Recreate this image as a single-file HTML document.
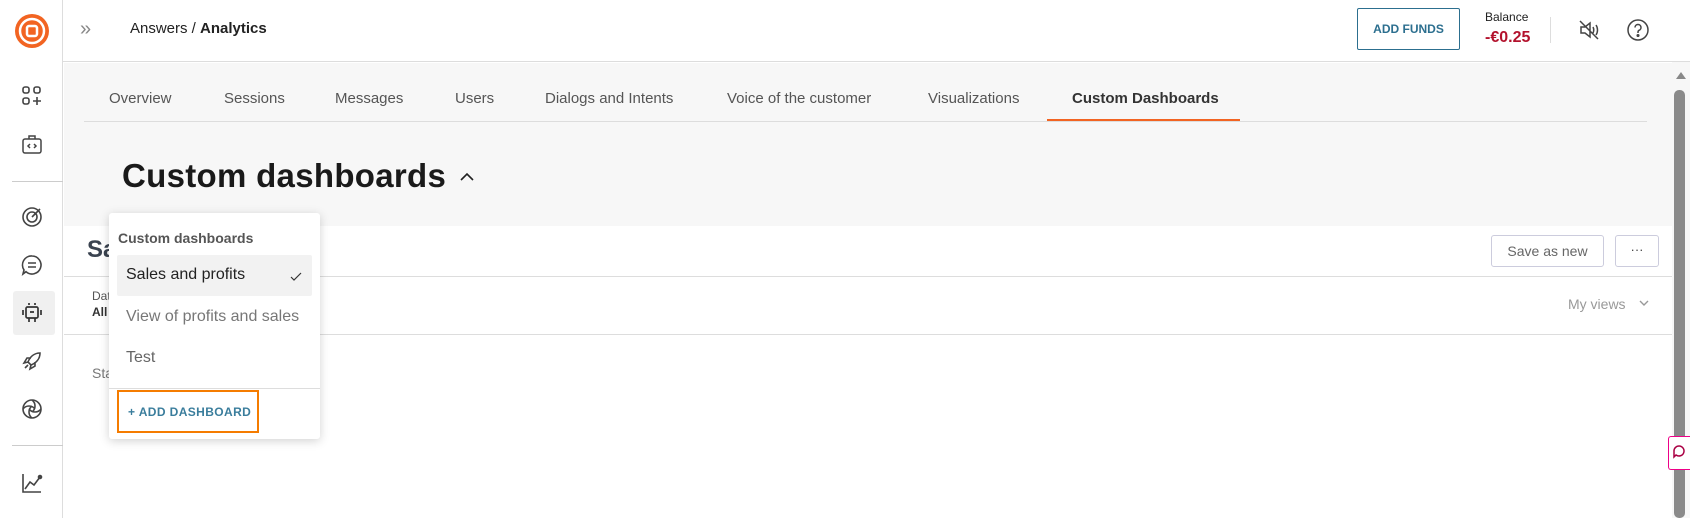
<!DOCTYPE html>
<html><head><meta charset="utf-8"><style>
*{box-sizing:border-box;margin:0;padding:0}
body{width:1690px;height:518px;overflow:hidden;background:#fff;font-family:"Liberation Sans",Arial,sans-serif;position:relative;color:#222}
.abs{position:absolute}
.side{left:0;top:0;width:63px;height:518px;border-right:1px solid #ddd;background:#fff}
.ic{position:absolute;left:20px;width:24px;height:24px}
.tab{position:absolute;top:90px;font-size:15px;color:#555}
</style></head><body>
<div class="abs side">
 <svg class="abs" style="left:14px;top:13px" width="36" height="36" viewBox="0 0 36 36"><circle cx="18" cy="18" r="17" fill="#f26422"/><circle cx="18" cy="18" r="12" fill="none" stroke="#fff" stroke-width="2.5"/><rect x="13" y="13" width="10" height="10" rx="2" fill="none" stroke="#fff" stroke-width="2.5"/></svg>
 <svg class="ic" style="top:84px" viewBox="0 0 24 24" fill="none" stroke="#444" stroke-width="1.6"><rect x="3" y="3" width="6" height="6" rx="2"/><rect x="14" y="3" width="6" height="6" rx="2"/><rect x="3" y="14" width="6" height="6" rx="2"/><path d="M17 13v8M13 17h8"/></svg>
 <svg class="ic" style="top:133px" viewBox="0 0 24 24" fill="none" stroke="#444" stroke-width="1.5"><rect x="3" y="6" width="18" height="14" rx="2"/><path d="M9 6V3h6v3M10 11l-2 2 2 2M14 11l2 2-2 2"/></svg>
 <div class="abs" style="left:12px;top:181px;width:51px;border-top:1px solid #ccc"></div>
 <svg class="ic" style="top:205px" viewBox="0 0 24 24" fill="none" stroke="#444" stroke-width="1.6"><circle cx="12" cy="12" r="9"/><circle cx="12" cy="12" r="5"/><path d="M12 12l8-8"/></svg>
 <svg class="ic" style="top:253px" viewBox="0 0 24 24" fill="none" stroke="#444" stroke-width="1.6"><path d="M12 3a9 9 0 1 1-6 15.7L3 21l1-4A9 9 0 0 1 12 3z"/><path d="M8 10h8M8 14h8"/></svg>
 <div class="abs" style="left:13px;top:291px;width:42px;height:44px;background:#f0f0f0;border-radius:3px"></div>
 <svg class="ic" style="top:301px" viewBox="0 0 24 24" fill="none" stroke="#333" stroke-width="1.7"><rect x="6" y="6" width="12" height="11" rx="1.5"/><path d="M9 2v2M15 2v2M3 9v5M21 9v5M9 17v4M15 17v4M10 11h4"/></svg>
 <svg class="ic" style="top:349px" viewBox="0 0 24 24" fill="none" stroke="#444" stroke-width="1.6"><path d="M20 4c-6 0-10 4-12 9l3 3c5-2 9-6 9-12zM8 13l-4 1 3-5h4M11 16l-1 4 5-3v-4M5 19l3-3"/></svg>
 <svg class="ic" style="top:397px" viewBox="0 0 24 24" fill="none" stroke="#444" stroke-width="1.6"><circle cx="12" cy="12" r="9"/><path d="M12 3c4 3 4 9 0 12M21 12c-3 4-9 4-12 0M12 21c-4-3-4-9 0-12M3 12c3-4 9-4 12 0"/></svg>
 <div class="abs" style="left:12px;top:445px;width:51px;border-top:1px solid #ccc"></div>
 <svg class="ic" style="top:471px" viewBox="0 0 24 24" fill="none" stroke="#444" stroke-width="1.6"><path d="M3 3v18h18M5 18l5-7 4 3 6-8"/><circle cx="20" cy="6" r="1.5" fill="#444"/></svg>
</div>
<!-- header -->
<div class="abs" style="left:63px;top:0;width:1627px;height:62px;border-bottom:1px solid #ddd;background:#fff"></div>
<div class="abs" style="left:80px;top:18px;font-size:20px;color:#888">&raquo;</div>
<div class="abs" style="left:130px;top:20px;font-size:15px;color:#222">Answers / <b>Analytics</b></div>
<div class="abs" style="left:1357px;top:8px;width:103px;height:42px;border:1.5px solid #2c6f8f;border-radius:2px;color:#2c6f8f;font-size:12px;font-weight:bold;display:flex;align-items:center;justify-content:center">ADD FUNDS</div>
<div class="abs" style="left:1485px;top:10px;font-size:12px;color:#222">Balance</div>
<div class="abs" style="left:1485px;top:29px;font-size:16px;color:#b3122d;font-weight:bold">-€0.25</div>
<div class="abs" style="left:1550px;top:17px;height:26px;border-left:1px solid #ddd"></div>
<svg class="abs" style="left:1577px;top:18px" width="24" height="24" viewBox="0 0 24 24" fill="none" stroke="#444" stroke-width="1.5"><path d="M4 9h4l5-4v14l-5-4H4zM16 9c1 2 1 4 0 6M19 7c2 3 2 7 0 10M3 3l18 18"/></svg>
<svg class="abs" style="left:1626px;top:18px" width="24" height="24" viewBox="0 0 24 24" fill="none" stroke="#444" stroke-width="1.5"><circle cx="12" cy="12" r="10"/><path d="M9 9.5a3 3 0 1 1 4 2.8c-.8.4-1 1-1 2v.7"/><circle cx="12" cy="17.5" r=".8" fill="#444"/></svg>
<!-- gray area -->
<div class="abs" style="left:64px;top:63px;width:1608px;height:163px;background:#f7f7f7"></div>
<div class="abs" style="left:84px;top:121px;width:1563px;border-top:1px solid #ddd"></div>
<div class="tab" style="left:109px">Overview</div>
<div class="tab" style="left:224px">Sessions</div>
<div class="tab" style="left:335px">Messages</div>
<div class="tab" style="left:455px">Users</div>
<div class="tab" style="left:545px">Dialogs and Intents</div>
<div class="tab" style="left:727px">Voice of the customer</div>
<div class="tab" style="left:928px">Visualizations</div>
<div class="tab" style="left:1072px;font-weight:bold;color:#333">Custom Dashboards</div>
<div class="abs" style="left:1047px;top:119px;width:193px;height:2px;background:#f26422"></div>
<div class="abs" style="left:122px;top:157px;font-size:33px;font-weight:bold;color:#1a1a1a;letter-spacing:0.3px">Custom dashboards</div>
<svg class="abs" style="left:459px;top:171px" width="16" height="12" viewBox="0 0 16 12" fill="none" stroke="#222" stroke-width="1.6"><path d="M2 9l6-6 6 6"/></svg>
<!-- scrollbar -->
<div class="abs" style="left:1672px;top:62px;width:18px;height:456px;background:#f7f7f7"></div>
<div class="abs" style="left:1676px;top:72px;width:0;height:0;border-left:5px solid transparent;border-right:5px solid transparent;border-bottom:7px solid #888"></div>
<div class="abs" style="left:1674px;top:90px;width:11px;height:428px;background:#8a8a8a;border-radius:5px"></div>
<!-- white content -->
<div class="abs" style="left:87px;top:236px;font-size:24px;font-weight:bold;color:#3a4350">Sa</div>
<div class="abs" style="left:1491px;top:235px;width:113px;height:32px;border:1px solid #ccd;border-radius:3px;font-size:14px;color:#666;text-align:center;line-height:30px">Save as new</div>
<div class="abs" style="left:1615px;top:235px;width:44px;height:32px;border:1px solid #ccd;border-radius:3px;font-size:13px;color:#444;text-align:center;line-height:28px">···</div>
<div class="abs" style="left:64px;top:276px;width:1608px;border-top:1px solid #ddd"></div>
<div class="abs" style="left:92px;top:289px;font-size:12px;color:#555">Dat</div>
<div class="abs" style="left:92px;top:305px;font-size:12px;color:#333;font-weight:bold">All</div>
<div class="abs" style="left:1568px;top:296px;font-size:14px;color:#999">My views</div>
<svg class="abs" style="left:1639px;top:299px" width="10" height="8" viewBox="0 0 10 8" fill="none" stroke="#999" stroke-width="1.4"><path d="M1 2l4 4 4-4"/></svg>
<div class="abs" style="left:64px;top:334px;width:1608px;border-top:1px solid #ddd"></div>
<div class="abs" style="left:92px;top:365px;font-size:14px;color:#777">Sta</div>
<div class="abs" style="left:1668px;top:436px;width:22px;height:34px;border:1px solid #e08;border-right:none;background:#fff;border-radius:3px 0 0 3px"></div>
<svg class="abs" style="left:1672px;top:444px" width="14" height="16" viewBox="0 0 14 16" fill="none" stroke="#a04" stroke-width="1.5"><path d="M7 2a5 5 0 1 1-3 9l-2 2V7a5 5 0 0 1 5-5z"/></svg>
<!-- dropdown -->
<div class="abs" style="left:109px;top:213px;width:211px;height:226px;background:#fff;border-radius:3px;box-shadow:0 2px 10px rgba(0,0,0,.18)">
 <div class="abs" style="left:9px;top:17px;font-size:14px;font-weight:bold;color:#555">Custom dashboards</div>
 <div class="abs" style="left:8px;top:42px;width:195px;height:41px;background:#f2f2f2;border-radius:2px"></div>
 <div class="abs" style="left:17px;top:53px;font-size:16px;color:#222">Sales and profits</div>
 <svg class="abs" style="left:181px;top:59px" width="12" height="10" viewBox="0 0 12 10" fill="none" stroke="#333" stroke-width="1.2"><path d="M1 5l3 3 7-7"/></svg>
 <div class="abs" style="left:17px;top:95px;font-size:16px;color:#777">View of profits and sales</div>
 <div class="abs" style="left:17px;top:136px;font-size:16px;color:#666">Test</div>
 <div class="abs" style="left:0;top:175px;width:211px;border-top:1px solid #ddd"></div>
 <div class="abs" style="left:8px;top:177px;width:142px;height:43px;border:2px solid #f57c00"></div>
 <div class="abs" style="left:19px;top:192px;font-size:12px;font-weight:bold;color:#3a7d9c;letter-spacing:0.4px">+ ADD DASHBOARD</div>
</div>
</body></html>
